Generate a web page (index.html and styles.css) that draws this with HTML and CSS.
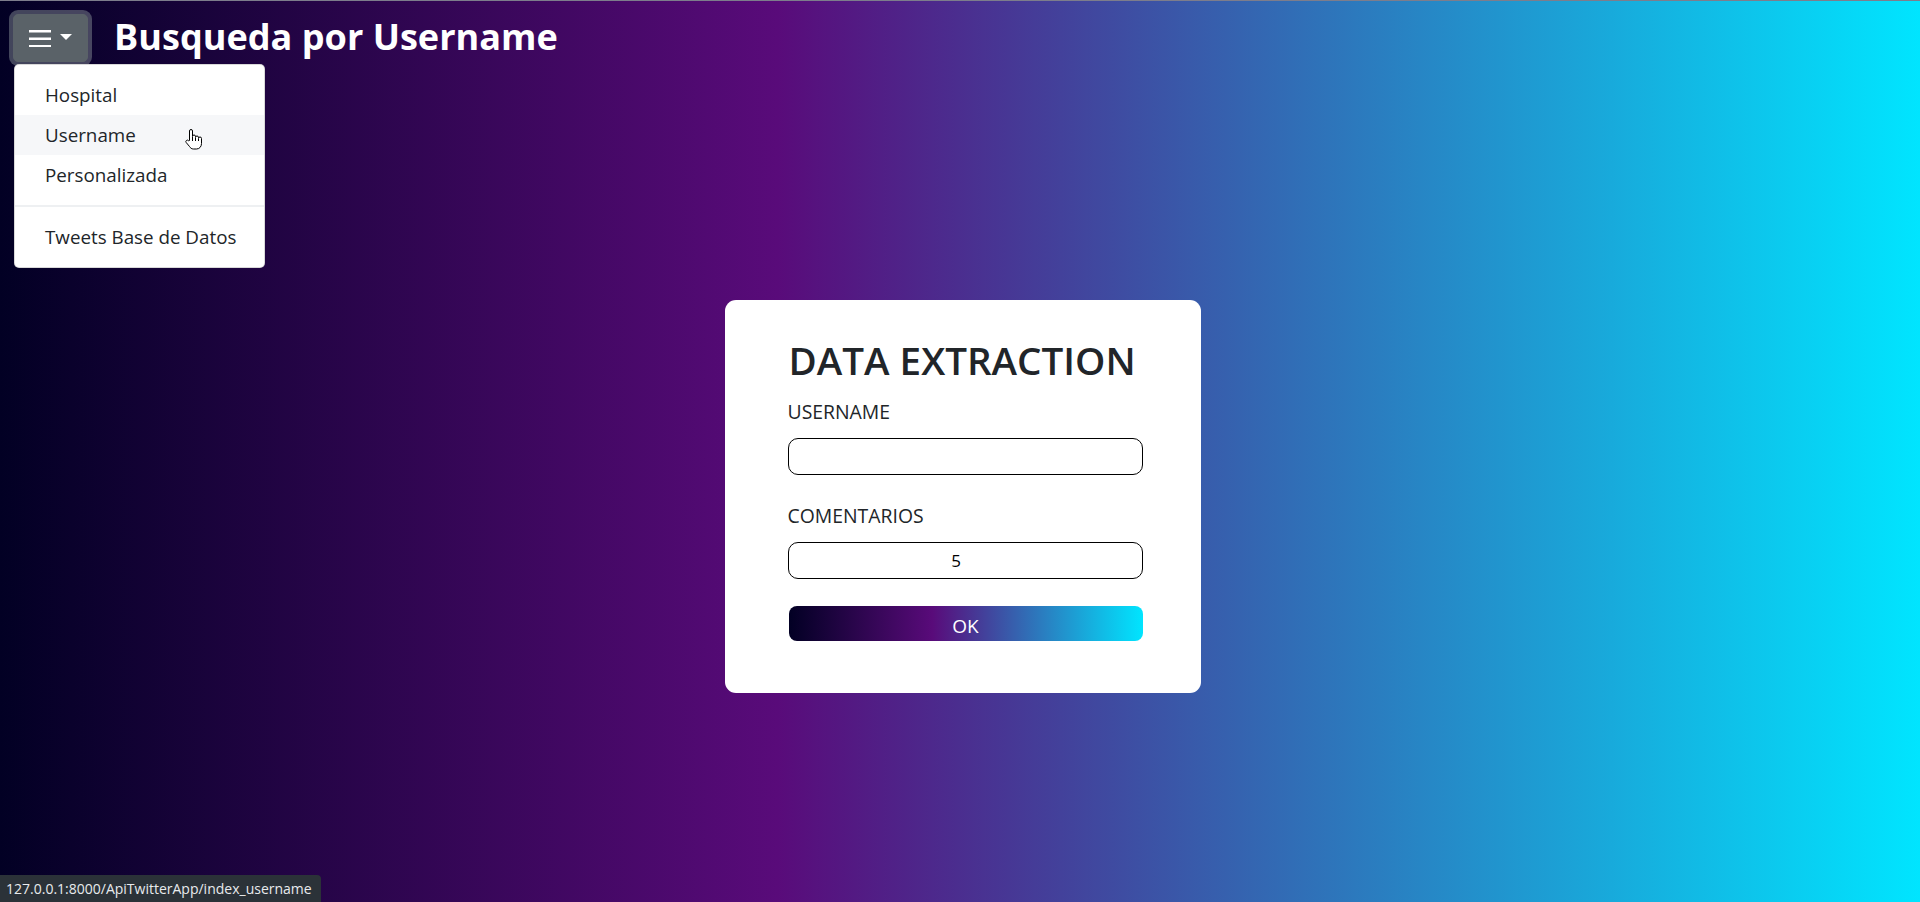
FILE: index.html
```html
<!DOCTYPE html>
<html lang="es">
<head>
<meta charset="utf-8">
<title>Busqueda por Username</title>
<link rel="stylesheet" href="styles.css">
</head>
<body>
<header class="topbar">
  <div class="dropdown">
    <button class="menu-btn" type="button">
      <svg class="burger" width="22" height="18" viewBox="0 0 22 18"><rect x="0" y="1" width="22" height="2.5" fill="#fff"/><rect x="0" y="8.5" width="22" height="2.5" fill="#fff"/><rect x="0" y="16" width="22" height="2.5" fill="#fff"/></svg>
      <span class="caret"></span>
    </button>
    <div class="dropdown-menu">
      <a class="dropdown-item">Hospital</a>
      <a class="dropdown-item active">Username</a>
      <a class="dropdown-item">Personalizada</a>
      <div class="divider"></div>
      <a class="dropdown-item">Tweets Base de Datos</a>
    </div>
  </div>
  <h1 class="page-title">Busqueda por Username</h1>
</header>

<main class="main">
  <section class="card">
    <h2 class="card-title">DATA EXTRACTION</h2>
    <label class="field-label">USERNAME</label>
    <input class="field" type="text" value="">
    <label class="field-label second">COMENTARIOS</label>
    <input class="field number" type="text" value="5">
    <button class="ok-btn" type="button">OK</button>
  </section>
</main>

<div class="status">127.0.0.1:8000/ApiTwitterApp/index_username</div>

<svg class="cursor" width="19" height="21" viewBox="0 0 19 21">
  <path d="M5.5 11.5 V2 a1.5 1.5 0 0 1 3 0 V7.5 a1.5 1.5 0 0 1 3 0 V8.5 a1.5 1.5 0 0 1 3 0 V9.5 a1.5 1.5 0 0 1 3 0 V14.5 c0 3 -2 5.5 -5 5.5 H9.5 c-2 0 -3 -1 -4 -2.5 L2.2 13.5 a1.4 1.4 0 0 1 2.2 -1.8 Z" fill="#fff" stroke="#000" stroke-width="1" stroke-linejoin="round"/>
  <path d="M8.5 8 V12 M11.5 9 V12 M14.5 10 V12" stroke="#000" stroke-width="1" fill="none"/>
</svg>
</body>
</html>
```

FILE: styles.css
```css
* { box-sizing: border-box; }

html, body { height: 100%; }

body {
  margin: 0;
  min-height: 902px;
  font-family: "Segoe UI", "Open Sans", "Noto Sans", sans-serif;
  color: #212529;
  background: linear-gradient(90deg, #020024 0%, #590b7a 40.5%, #00e5ff 100%);
  border-top: 1px solid #7d7d8c;
  position: relative;
  overflow: hidden;
}

.topbar {
  display: flex;
  align-items: flex-start;
  padding: 13px 0 0 13px;
}

.dropdown { position: relative; }

.menu-btn {
  display: flex;
  align-items: center;
  width: 75px;
  height: 48px;
  padding: 0 0 0 15px;
  border: 1px solid #5a6268;
  border-radius: 5px;
  background: #5a6268;
  box-shadow: 0 0 0 4px rgba(130, 138, 145, 0.5);
  cursor: pointer;
}

.burger { display: block; }

.caret {
  width: 0;
  height: 0;
  margin-left: 9px;
  margin-top: -3px;
  border-top: 6px solid #fff;
  border-left: 6px solid transparent;
  border-right: 6px solid transparent;
}

.dropdown-menu {
  position: absolute;
  top: 50px;
  left: 1px;
  width: 251px;
  padding: 10px 0;
  background: #fff;
  border: 1px solid rgba(0, 0, 0, 0.15);
  border-radius: 5px;
  z-index: 5;
}

.dropdown-item {
  display: block;
  padding: 5px 30px;
  font-size: 18.8px;
  line-height: 30px;
  color: #212529;
  white-space: nowrap;
}

.dropdown-item.active { background: #f6f7f9; }

.divider {
  height: 0;
  margin: 10px 0;
  border-top: 2px solid #eef0f2;
}

.page-title {
  margin: -2px 0 0 26px;
  font-size: 36.1px;
  line-height: 48px;
  font-weight: 700;
  color: #fff;
}

.main {
  display: flex;
  justify-content: center;
  padding-top: 238px;
}

.card {
  display: flex;
  flex-direction: column;
  width: 476px;
  margin-left: 5px;
  padding: 36px 58px 52px 63px;
  background: #fff;
  border-radius: 11px;
}

.card-title {
  margin: 0 0 13px 1px;
  font-size: 38.6px;
  line-height: 48px;
  font-weight: 600;
  color: #212529;
  white-space: nowrap;
}

.field-label {
  display: block;
  margin: 0 0 11px 0;
  font-size: 19.4px;
  line-height: 30px;
  color: #212529;
}

.field-label.second { margin-top: 26px; }

.field {
  display: block;
  width: 355px;
  height: 37px;
  padding: 0 8px;
  border: 1px solid #000;
  border-radius: 10px;
  font-family: inherit;
  font-size: 17px;
  color: #000;
  background: #fff;
  outline: none;
}

.field.number {
  text-align: center;
  padding-right: 26px;
}

.ok-btn {
  display: block;
  width: 354px;
  height: 35px;
  margin: 27px 0 0 1px;
  border: 0;
  border-radius: 8px;
  background: linear-gradient(90deg, #020024 0%, #590b7a 40.5%, #00e5ff 100%);
  color: #fff;
  font-family: inherit;
  font-size: 19px;
  line-height: 35px;
  padding: 3px 0 0 0;
  cursor: pointer;
}

.status {
  position: absolute;
  left: 0;
  bottom: 0;
  width: 321px;
  height: 27px;
  padding: 0 0 0 6px;
  background: #2b3238;
  color: #e8eaed;
  font-family: "Segoe UI", "Open Sans", "Noto Sans", sans-serif;
  font-size: 14px;
  line-height: 27px;
  border-top-right-radius: 4px;
  white-space: nowrap;
}

.cursor {
  position: absolute;
  left: 184px;
  top: 128px;
  z-index: 10;
}
```
